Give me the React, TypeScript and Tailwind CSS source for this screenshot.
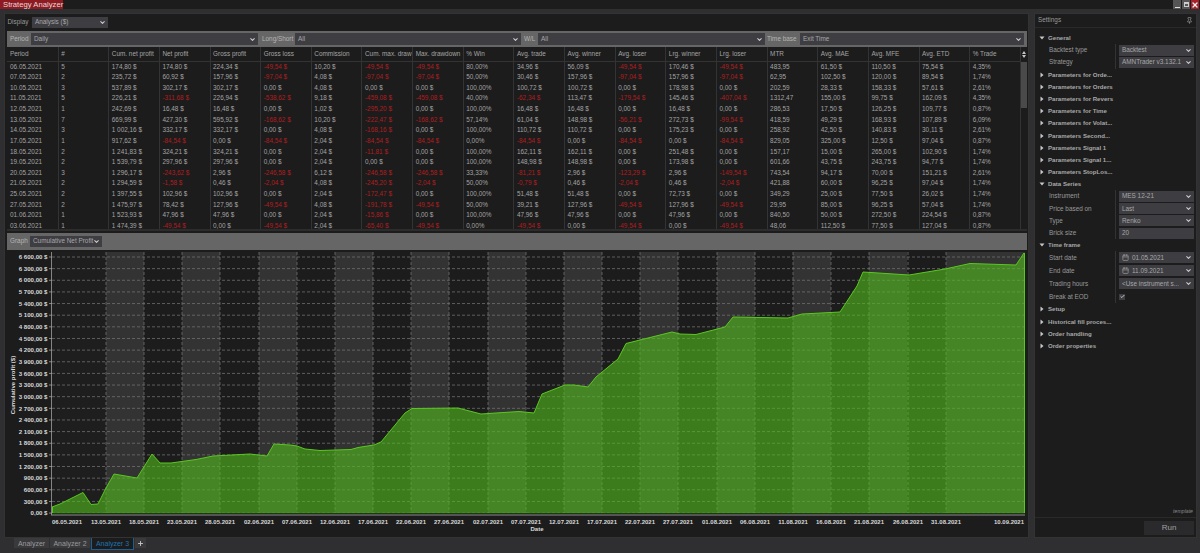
import { Calendar, Check, ChevronDown, Pin, Plus, X } from "lucide-react";

const columns = [
  "Period", "#", "Cum. net profit", "Net profit", "Gross profit", "Gross loss", "Commission", "Cum. max. draw",
  "Max. drawdown", "% Win", "Avg. trade", "Avg. winner", "Avg. loser", "Lrg. winner", "Lrg. loser", "MTR",
  "Avg. MAE", "Avg. MFE", "Avg. ETD", "% Trade",
];

// columns without a $ suffix
const plain = [0, 1, 9, 15, 19];

const rows = [
  "06.05.2021|5|174,80|174,80|224,34|-49,54|10,20|-49,54|-49,54|80,00%|34,96|56,09|-49,54|170,46|-49,54|483,95|61,50|110,50|75,54|4,35%",
  "07.05.2021|2|235,72|60,92|157,96|-97,04|4,08|-97,04|-97,04|50,00%|30,46|157,96|-97,04|157,96|-97,04|62,95|102,50|120,00|89,54|1,74%",
  "10.05.2021|3|537,89|302,17|302,17|0,00|4,08|0,00|0,00|100,00%|100,72|100,72|0,00|178,98|0,00|202,59|28,33|158,33|57,61|2,61%",
  "11.05.2021|5|226,21|-311,68|226,94|-538,62|9,18|-459,08|-459,08|40,00%|-62,34|113,47|-179,54|145,46|-407,04|1312,47|155,00|99,75|162,09|4,35%",
  "12.05.2021|1|242,69|16,48|16,48|0,00|1,02|-295,20|0,00|100,00%|16,48|16,48|0,00|16,48|0,00|286,53|17,50|126,25|109,77|0,87%",
  "13.05.2021|7|669,99|427,30|595,92|-168,62|10,20|-222,47|-168,62|57,14%|61,04|148,98|-56,21|272,73|-99,54|418,59|49,29|168,93|107,89|6,09%",
  "14.05.2021|3|1 002,16|332,17|332,17|0,00|4,08|-168,16|0,00|100,00%|110,72|110,72|0,00|175,23|0,00|258,92|42,50|140,83|30,11|2,61%",
  "17.05.2021|1|917,62|-84,54|0,00|-84,54|2,04|-84,54|-84,54|0,00%|-84,54|0,00|-84,54|0,00|-84,54|829,05|325,00|12,50|97,04|0,87%",
  "18.05.2021|2|1 241,83|324,21|324,21|0,00|2,04|-11,81|0,00|100,00%|162,11|162,11|0,00|251,48|0,00|157,17|15,00|265,00|102,90|1,74%",
  "19.05.2021|2|1 539,79|297,96|297,96|0,00|2,04|0,00|0,00|100,00%|148,98|148,98|0,00|173,98|0,00|601,66|43,75|243,75|94,77|1,74%",
  "20.05.2021|3|1 296,17|-243,62|2,96|-246,58|6,12|-246,58|-246,58|33,33%|-81,21|2,96|-123,29|2,96|-149,54|743,54|94,17|70,00|151,21|2,61%",
  "21.05.2021|2|1 294,59|-1,58|0,46|-2,04|4,08|-245,20|-2,04|50,00%|-0,79|0,46|-2,04|0,46|-2,04|421,88|60,00|96,25|97,04|1,74%",
  "25.05.2021|2|1 397,55|102,96|102,96|0,00|2,04|-172,47|0,00|100,00%|51,48|51,48|0,00|72,73|0,00|349,29|25,00|77,50|26,02|1,74%",
  "27.05.2021|2|1 475,97|78,42|127,96|-49,54|4,08|-191,78|-49,54|50,00%|39,21|127,96|-49,54|127,96|-49,54|29,95|85,00|96,25|57,04|1,74%",
  "01.06.2021|1|1 523,93|47,96|47,96|0,00|2,04|-15,86|0,00|100,00%|47,96|47,96|0,00|47,96|0,00|840,50|50,00|272,50|224,54|0,87%",
  "03.06.2021|1|1 474,39|-49,54|0,00|-49,54|2,04|-65,40|-49,54|0,00%|-49,54|0,00|-49,54|0,00|-49,54|48,06|112,50|77,50|127,04|0,87%",
].map((r) => r.split("|"));

const curve = [
  [52, 507], [60, 504], [83, 492.5], [91, 504.5], [98, 504], [106, 488], [114, 474], [137, 478], [152, 454], [160, 463],
  [171, 463], [196, 459.5], [213, 456], [250, 454], [267, 456], [274, 444], [290, 445], [297, 446], [305, 449], [320, 450.5],
  [351, 449.5], [358, 447.5], [374, 445], [381, 442], [405, 413], [412, 408.5], [458, 408], [481, 414], [519, 411.5],
  [534, 413], [542, 394], [565, 385], [574, 385], [588, 387], [596, 377], [618, 359], [626, 343.5], [672, 332], [680, 334],
  [696, 334.5], [725, 327], [733, 317], [788, 318], [802, 314], [840, 312], [857, 286], [863, 272], [909, 275], [945, 269],
  [970, 263.5], [1016, 265], [1024, 253],
];

const xLabels: [number, string][] = [
  [67, "06.05.2021"], [106, "13.05.2021"], [144, "18.05.2021"], [182, "23.05.2021"], [220, "28.05.2021"],
  [259, "02.06.2021"], [297, "07.06.2021"], [335, "12.06.2021"], [373, "17.06.2021"], [411, "22.06.2021"],
  [449, "27.06.2021"], [488, "02.07.2021"], [526, "07.07.2021"], [564, "12.07.2021"], [602, "17.07.2021"],
  [640, "22.07.2021"], [678, "27.07.2021"], [717, "01.08.2021"], [755, "06.08.2021"], [793, "11.08.2021"],
  [831, "16.08.2021"], [869, "21.08.2021"], [908, "26.08.2021"], [946, "31.08.2021"], [1009, "10.09.2021"],
];

const yLabels = [
  "6 600,00 $", "6 300,00 $", "6 000,00 $", "5 700,00 $", "5 400,00 $", "5 100,00 $", "4 800,00 $", "4 500,00 $",
  "4 200,00 $", "3 900,00 $", "3 600,00 $", "3 300,00 $", "3 000,00 $", "2 700,00 $", "2 400,00 $", "2 100,00 $",
  "1 800,00 $", "1 500,00 $", "1 200,00 $", "900,00 $", "600,00 $", "300,00 $", "0,00 $",
];

const vLines = xLabels.slice(1, -1).map((l) => l[0]);
const bands = [106, 182, 259, 335, 411, 488, 564, 640, 717, 793, 869, 946];

function Select({ value, className }: { value: string; className: string }) {
  return (
    <div className={`flex items-center justify-between bg-[#3d3d42] pl-[3px] pr-[2px] text-[#a8a8a8] ${className}`}>
      <span className="whitespace-nowrap">{value}</span>
      <ChevronDown size={7} strokeWidth={3.5} className="shrink-0 text-[#d0d0d0]" />
    </div>
  );
}

function Chart() {
  const line = curve.map((p) => p.join(",")).join(" ");
  return (
    <svg viewBox="7 251 1020 283" className="mt-[1px] block h-[283px] w-[1020px]">
      {bands.map((x) => (
        <rect key={x} x={x} y={252} width={x === 946 ? 79 : 38} height={261} fill="#333334" />
      ))}
      <rect x={52} y={252} width={54} height={261} fill="#1e1e1e" />
      {yLabels.map((label, i) => {
        const y = 257 + i * 11.64;
        return (
          <g key={label}>
            <line x1={52} x2={1025} y1={y} y2={y} stroke="#707070" strokeWidth={0.8} strokeDasharray="3 2" />
            <line x1={49} x2={52} y1={y} y2={y} stroke="#a0a0a0" strokeWidth={0.8} />
            <text x={47.5} y={y + 2.2} textAnchor="end" className="fill-[#d8d8d8] text-[6.1px] font-bold">
              {label}
            </text>
          </g>
        );
      })}
      {vLines.map((x) => (
        <line key={x} x1={x} x2={x} y1={252} y2={513} stroke="#707070" strokeWidth={0.8} strokeDasharray="3 2" />
      ))}
      <polygon points={`52,513 ${line} 1024,513`} fill="#52bc1e" fillOpacity={0.6} />
      <polyline points={line} fill="none" stroke="#5ac81e" strokeWidth={1} />
      <line x1={1024.5} x2={1024.5} y1={253} y2={513} stroke="#5ac81e" strokeWidth={1} />
      <line x1={52.5} x2={52.5} y1={507} y2={513} stroke="#5ac81e" strokeWidth={1} />
      <line x1={52} x2={1025} y1={513.5} y2={513.5} stroke="#1c3a10" strokeWidth={1} />
      <line x1={51.5} x2={51.5} y1={252} y2={515} stroke="#a0a0a0" strokeWidth={0.8} />
      <line x1={51} x2={1025} y1={515} y2={515} stroke="#8c8c8c" strokeWidth={1} />
      {xLabels.map(([x, label]) => (
        <text key={label} x={x} y={523.5} textAnchor="middle" className="fill-[#d8d8d8] text-[6px] font-bold">
          {label}
        </text>
      ))}
      <text x={537} y={531} textAnchor="middle" className="fill-[#d8d8d8] text-[6px] font-bold">
        Date
      </text>
      <text
        x={14.5}
        y={385}
        textAnchor="middle"
        transform="rotate(-90 14.5 385)"
        className="fill-[#d8d8d8] text-[6px] font-bold"
      >
        Cumulative profit ($)
      </text>
    </svg>
  );
}

function Section({ label, open }: { label: string; open?: boolean }) {
  return (
    <div className="flex h-[12.2px] items-center pl-[4px] text-[6.1px] font-bold text-[#a8a8a8]">
      <svg viewBox="0 0 6 6" className="mr-[3px] h-[6px] w-[6px]">
        {open ? <path d="M0.5 1.5h5L3 4.5z" fill="#c8c8c8" /> : <path d="M1.5 0.5v5L4.5 3z" fill="#c8c8c8" />}
      </svg>
      <span>{label}</span>
    </div>
  );
}

function Prop({ label, h = "h-[12.2px]", children }: { label: string; h?: string; children: React.ReactNode }) {
  return (
    <div className={`flex items-center ${h}`}>
      <div className="w-[80px] pl-[14px] text-[#9a9a9a]">{label}</div>
      <div className="flex h-full w-[81px] items-center border-l border-[#333] pl-[3px]">{children}</div>
    </div>
  );
}

function Field({ value, icon, plainField }: { value: string; icon?: boolean; plainField?: boolean }) {
  return (
    <div className="flex h-[11px] w-[75px] items-center justify-between bg-[#3d3d42] pl-[3px] pr-[2px] text-[#a8a8a8]">
      <span className="flex items-center gap-[3px] whitespace-nowrap">
        {icon && <Calendar size={7} strokeWidth={3} className="shrink-0 text-[#8a8a8a]" />}
        <span>{value}</span>
      </span>
      {!plainField && <ChevronDown size={7} strokeWidth={3.5} className="shrink-0 text-[#d0d0d0]" />}
    </div>
  );
}

export default function App() {
  return (
    <div className="flex h-[553px] w-[1200px] flex-col overflow-hidden bg-[#2f2f31] font-['Liberation_Sans',Arial,sans-serif] text-[6.4px] leading-none text-[#a4a4a4]">
      {/* title bar */}
      <div className="flex h-[9px] items-stretch justify-between bg-[#1c1c1c]">
        <div className="flex w-[63px] items-center whitespace-nowrap bg-[#8e1a22] pl-[3px] text-[7.7px] text-[#e8d8d8]">
          Strategy Analyzer
        </div>
        <div className="flex gap-[1px] pr-[1px]">
          <div className="flex w-[8px] items-end justify-center bg-[#555] pb-[1px]">
            <div className="h-[1px] w-[5px] bg-[#ddd]" />
          </div>
          <div className="flex w-[8px] items-center justify-center bg-[#555]">
            <div className="h-[5px] w-[5px] border border-t-2 border-[#ccc]" />
          </div>
          <div className="flex w-[8px] items-center justify-center bg-[#a5212a]">
            <X size={8} strokeWidth={4} className="text-[#eee]" />
          </div>
        </div>
      </div>

      <div className="flex h-[529px] gap-[5px] pl-[4px] pr-[3px] pt-[4px]">
        {/* analyzer panel */}
        <div className="flex w-[1025px] flex-col border border-[#333] bg-[#1c1c1c] pl-[2px]">
          <div className="flex h-[17px] items-center gap-[1px] pb-[2px] pt-[1px]">
            <span className="w-[24px] pl-[0.5px] text-[#999]">Display</span>
            <Select value="Analysis ($)" className="h-[11px] w-[76px]" />
          </div>

          <div className="flex h-[16px] w-[1020px] items-center bg-[#666] px-[2px] text-[#b4b4b4]">
            <span className="w-[22px] pl-[1px]">Period</span>
            <Select value="Daily" className="h-[12px] w-[227px]" />
            <span className="w-[37px] pl-[4px]">Long/Short</span>
            <Select value="All" className="h-[12px] w-[226px]" />
            <span className="w-[17px] pl-[3px]">W/L</span>
            <Select value="All" className="h-[12px] w-[227px]" />
            <span className="w-[35px] pl-[2px]">Time base</span>
            <Select value="Exit Time" className="h-[12px] w-[224px]" />
          </div>

          {/* stats table */}
          <div className="flex h-[184px] w-[1020px] border-b-2 border-[#2c2c2c]">
            <div className="w-[1013px] overflow-hidden">
              <div className="grid h-[14.5px] grid-cols-[repeat(20,50.65px)] border-b border-[#333]">
                {columns.map((c, i) => (
                  <div
                    key={c}
                    className={`flex items-center overflow-hidden whitespace-nowrap ${i ? "border-l border-[#333] pl-[2.5px]" : "pl-[3px]"}`}
                  >
                    {c}
                  </div>
                ))}
              </div>
              {rows.map((row) => (
                <div key={row[0]} className="grid h-[10.63px] grid-cols-[repeat(20,50.65px)]">
                  {row.map((v, i) => (
                    <div
                      key={i}
                      className={`flex items-center whitespace-nowrap ${i ? "border-l border-[#333] pl-[2.5px]" : "pl-[3px]"} ${v.startsWith("-") ? "text-[#b01c20]" : ""}`}
                    >
                      {plain.includes(i) ? v : `${v} $`}
                    </div>
                  ))}
                </div>
              ))}
            </div>
            <div className="w-[7px] border-l border-[#333]">
              <div className="flex h-[14.5px] flex-col items-center justify-center gap-[1px]">
                <svg viewBox="0 0 4 3" className="h-[3px] w-[4px]">
                  <path d="M0 3h4L2 0z" fill="#c4c4c4" />
                </svg>
                <svg viewBox="0 0 4 3" className="h-[3px] w-[4px]">
                  <path d="M0 0h4L2 3z" fill="#c4c4c4" />
                </svg>
              </div>
              <div className="h-[46px] w-[6px] bg-[#4a4a4a]" />
            </div>
          </div>

          <div className="mt-[2px] flex h-[17px] w-[1020px] items-center bg-[#666] px-[2px] text-[#b4b4b4]">
            <span className="w-[21px] pl-[1px]">Graph</span>
            <Select value="Cumulative Net Profit" className="h-[11px] w-[72px]" />
          </div>
          <Chart />
        </div>

        {/* settings panel */}
        <div className="flex w-[163px] flex-col border border-[#333] bg-[#1c1c1c]">
          <div className="flex h-[14px] shrink-0 items-center justify-between border-b border-[#2a2a2a] pl-[3px] pr-[3px] text-[#999]">
            <span>Settings</span>
            <Pin size={7} className="text-[#aaa]" />
          </div>
          <div className="flex-1 pt-[4px]">
            <Section label="General" open />
            <Prop label="Backtest type"><Field value="Backtest" /></Prop>
            <Prop label="Strategy"><Field value="AMNTrader v3.132.1" /></Prop>
            <Section label="Parameters for Orde..." />
            <Section label="Parameters for Orders" />
            <Section label="Parameters for Revers" />
            <Section label="Parameters for Time" />
            <Section label="Parameters for Volat..." />
            <Section label="Parameters Second..." />
            <Section label="Parameters Signal 1" />
            <Section label="Parameters Signal 1..." />
            <Section label="Parameters StopLos..." />
            <Section label="Data Series" open />
            <Prop label="Instrument"><Field value="MES 12-21" /></Prop>
            <Prop label="Price based on"><Field value="Last" /></Prop>
            <Prop label="Type"><Field value="Renko" /></Prop>
            <Prop label="Brick size"><Field value="20" plainField /></Prop>
            <Section label="Time frame" open />
            <Prop label="Start date" h="h-[13px]"><Field value="01.05.2021" icon /></Prop>
            <Prop label="End date" h="h-[13px]"><Field value="11.09.2021" icon /></Prop>
            <Prop label="Trading hours" h="h-[13px]"><Field value="<Use instrument s..." /></Prop>
            <Prop label="Break at EOD" h="h-[13px]">
              <div className="flex h-[6px] w-[6px] items-center justify-center bg-[#3d3d42]">
                <Check size={5} strokeWidth={4} className="text-[#ddd]" />
              </div>
            </Prop>
            <Section label="Setup" />
            <Section label="Historical fill proces..." />
            <Section label="Order handling" />
            <Section label="Order properties" />
          </div>
          <div className="pb-[3px] pr-[3px] text-right text-[5.2px] italic text-[#888]">template</div>
          <div className="flex h-[20px] shrink-0 items-center justify-end border-t border-[#2a2a2a] pr-[2px]">
            <div className="flex h-[14px] w-[50px] items-center justify-center bg-[#2a2a2c] text-[8px] text-[#a0a0a0]">
              Run
            </div>
          </div>
        </div>
      </div>

      {/* workspace tabs */}
      <div className="flex flex-1 items-start gap-[1px] pl-[14px] text-[7px]">
        <div className="flex h-[10px] w-[35px] items-center justify-center bg-[#3a3a3d] text-[#999]">Analyzer</div>
        <div className="flex h-[10px] w-[40px] items-center justify-center bg-[#3a3a3d] text-[#999]">Analyzer 2</div>
        <div className="flex h-[12px] w-[43px] items-center justify-center border-x border-b border-[#1e5f8f] bg-[#1c1c1c] text-[#1f74b0]">
          Analyzer 3
        </div>
        <div className="flex h-[10px] w-[11px] items-center justify-center bg-[#3a3a3d]">
          <Plus size={7} strokeWidth={3} className="text-[#ccc]" />
        </div>
      </div>
    </div>
  );
}
